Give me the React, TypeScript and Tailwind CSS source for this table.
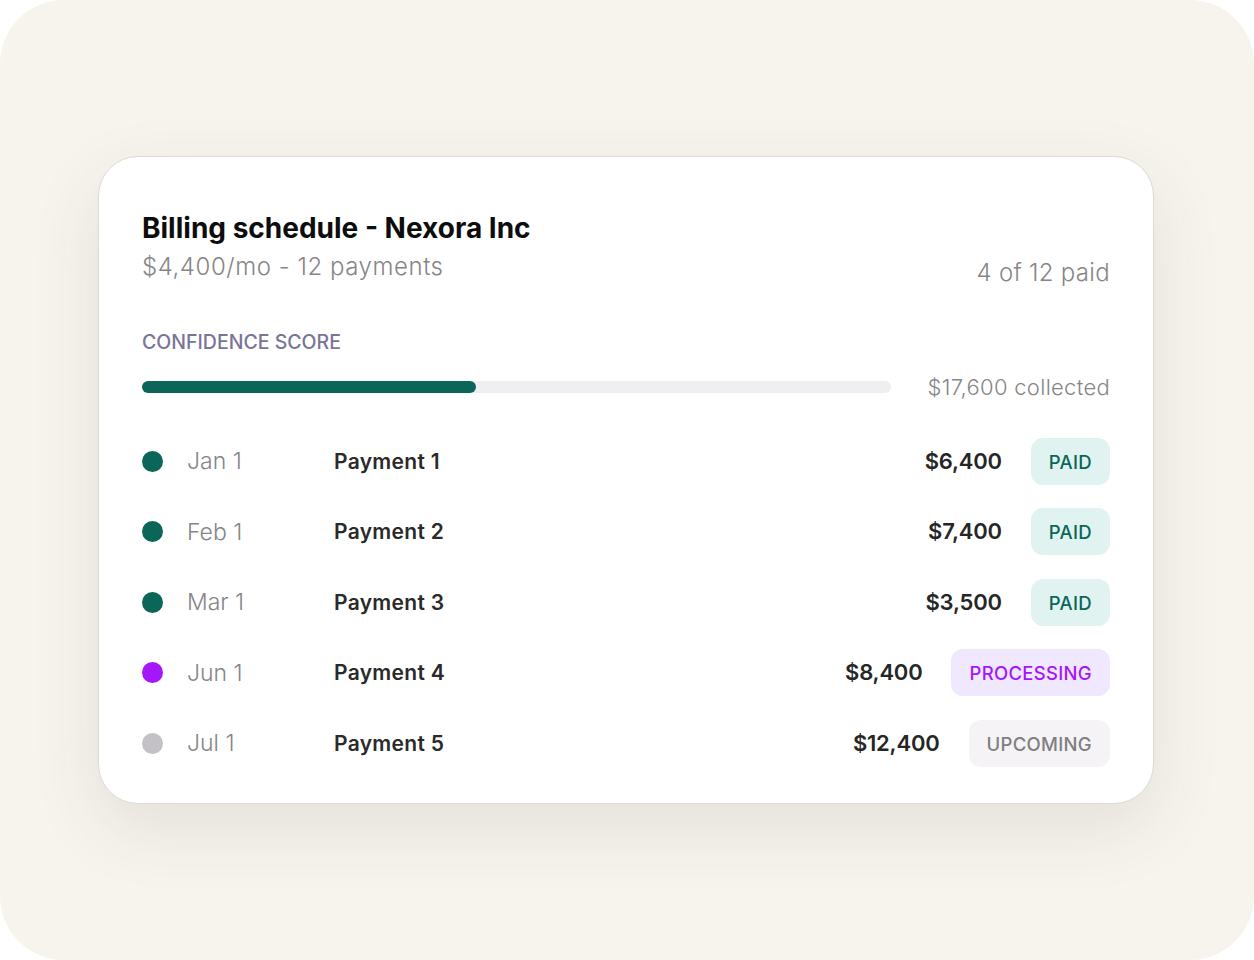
import React from 'react';

type Status = 'paid' | 'processing' | 'upcoming';

const payments: { date: string; label: string; amount: string; status: Status }[] = [
  { date: 'Jan 1', label: 'Payment 1', amount: '$6,400', status: 'paid' },
  { date: 'Feb 1', label: 'Payment 2', amount: '$7,400', status: 'paid' },
  { date: 'Mar 1', label: 'Payment 3', amount: '$3,500', status: 'paid' },
  { date: 'Jun 1', label: 'Payment 4', amount: '$8,400', status: 'processing' },
  { date: 'Jul 1', label: 'Payment 5', amount: '$12,400', status: 'upcoming' },
];

const dotClass: Record<Status, string> = {
  paid: 'bg-[#0b6659]',
  processing: 'bg-[#a516f9]',
  upcoming: 'bg-[#c3c1c6]',
};

const badgeClass: Record<Status, string> = {
  paid: 'bg-[#e1f3f0] text-[#0b6659]',
  processing: 'bg-[#efe8fe] text-[#a516f9]',
  upcoming: 'bg-[#f5f3f6] text-[#7f7f7f]',
};

const Badge = ({ status }: { status: Status }) => (
  <span
    className={`h-[47px] px-[18px] pt-[3px] flex items-center rounded-[12px] text-[18.5px] font-medium tracking-[0.3px] ${badgeClass[status]}`}
  >
    {status.toUpperCase()}
  </span>
);

const App = () => {
  return (
    <div className="w-[1254px] h-[960px] bg-white font-[Inter,'Noto_Sans',sans-serif]">
      <div className="h-full rounded-[64px] bg-[#f7f4ee] flex items-center justify-center">
        <div className="w-[1056px] h-[648px] mr-[2px] rounded-[40px] bg-white border border-[#dddad5] shadow-[0_24px_70px_rgba(60,50,30,0.10)] px-[43px] pt-[53px]">
          <div className="flex justify-between items-start">
            <div>
              <h1 className="text-[28px] leading-[36px] font-bold text-[#0d0d0d]">Billing schedule - Nexora Inc</h1>
              <p className="mt-[6px] text-[24px] leading-[30px] font-light text-[#868686] tracking-[0.55px]">
                $4,400/mo - 12 payments
              </p>
            </div>
            <p className="mt-[48px] text-[24px] leading-[30px] font-light text-[#868686] tracking-[0.3px]">
              4 of 12 paid
            </p>
          </div>

          <p className="mt-[42px] text-[19.5px] leading-[24px] font-medium text-[#7a7497]">CONFIDENCE SCORE</p>

          <div className="mt-[18px] flex items-center h-[30px]">
            <div className="w-[749px] h-[12px] rounded-full bg-[#efeef1]">
              <div className="h-full w-[44.6%] rounded-full bg-[#0b6659]" />
            </div>
            <span className="ml-auto text-[22px] leading-[30px] font-light text-[#868686] tracking-[0.3px]">
              $17,600 collected
            </span>
          </div>

          <div className="mt-[24px]">
            {payments.map((p) => (
              <div key={p.label} className="h-[70.5px] flex items-center">
                <span className={`w-[21px] h-[21px] rounded-full shrink-0 ${dotClass[p.status]}`} />
                <span className="ml-[24px] w-[147px] text-[23px] font-light text-[#858585]">{p.date}</span>
                <span className="text-[21px] font-semibold text-[#2a2a2a] tracking-[0.3px]">{p.label}</span>
                <div className="ml-auto flex items-center gap-[29px]">
                  <span className="text-[22px] font-semibold text-[#262626] tracking-[-0.2px]">{p.amount}</span>
                  <Badge status={p.status} />
                </div>
              </div>
            ))}
          </div>
        </div>
      </div>
    </div>
  );
};

export default App;
